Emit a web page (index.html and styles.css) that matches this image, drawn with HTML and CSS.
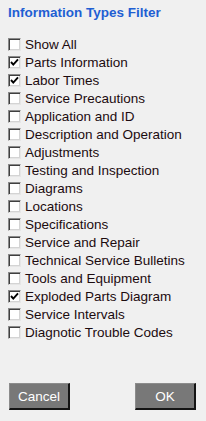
FILE: index.html
```html
<!DOCTYPE html>
<html lang="en">
<head>
    <meta charset="UTF-8">
    <meta name="viewport" content="width=device-width, initial-scale=1.0">
    <title>Information Types Filter</title>
    <link rel="stylesheet" href="styles.css">
</head>
<body>
    <div class="panel">
        <h1 class="title">Information Types Filter</h1>

        <ul class="filter-list">
            <li class="filter-item"><span class="box"></span>Show All</li>
            <li class="filter-item checked"><span class="box"><svg viewBox="0 0 9 9"><path d="M1 4 L3.3 6.6 L8 1.4" /></svg></span>Parts Information</li>
            <li class="filter-item checked"><span class="box"><svg viewBox="0 0 9 9"><path d="M1 4 L3.3 6.6 L8 1.4" /></svg></span>Labor Times</li>
            <li class="filter-item"><span class="box"></span>Service Precautions</li>
            <li class="filter-item"><span class="box"></span>Application and ID</li>
            <li class="filter-item"><span class="box"></span>Description and Operation</li>
            <li class="filter-item"><span class="box"></span>Adjustments</li>
            <li class="filter-item"><span class="box"></span>Testing and Inspection</li>
            <li class="filter-item"><span class="box"></span>Diagrams</li>
            <li class="filter-item"><span class="box"></span>Locations</li>
            <li class="filter-item"><span class="box"></span>Specifications</li>
            <li class="filter-item"><span class="box"></span>Service and Repair</li>
            <li class="filter-item"><span class="box"></span>Technical Service Bulletins</li>
            <li class="filter-item"><span class="box"></span>Tools and Equipment</li>
            <li class="filter-item checked"><span class="box"><svg viewBox="0 0 9 9"><path d="M1 4 L3.3 6.6 L8 1.4" /></svg></span>Exploded Parts Diagram</li>
            <li class="filter-item"><span class="box"></span>Service Intervals</li>
            <li class="filter-item"><span class="box"></span>Diagnotic Trouble Codes</li>
        </ul>

        <div class="actions">
            <button class="btn">Cancel</button>
            <button class="btn">OK</button>
        </div>
    </div>
</body>
</html>
```

FILE: styles.css
```css
* {
    margin: 0;
    padding: 0;
    box-sizing: border-box;
}

body {
    font-family: "Liberation Sans", Arial, sans-serif;
    background: #f0f0f0;
}

.panel {
    height: 100vh;
    display: flex;
    flex-direction: column;
    padding: 5px 0 11px 8px;
}

.title {
    font-size: 13.5px;
    font-weight: 700;
    line-height: 16px;
    color: #1f5fd3;
}

.filter-list {
    list-style: none;
    margin-top: 14px;
}

.filter-item {
    display: flex;
    align-items: center;
    height: 18px;
    font-size: 13.5px;
    color: #1c0b0f;
}

.box {
    width: 13px;
    height: 13px;
    margin-right: 4px;
    background: #fff;
    border-style: solid;
    border-width: 1px;
    border-color: #8a8a8a #e6e6e6 #e6e6e6 #8a8a8a;
    box-shadow: inset 1px 1px 0 #404040, inset -1px -1px 0 #d4d4d4;
    display: flex;
    align-items: center;
    justify-content: center;
}

.box svg {
    width: 9px;
    height: 9px;
}

.box path {
    fill: none;
    stroke: #000;
    stroke-width: 1.9;
}

.actions {
    margin-top: auto;
    display: flex;
    justify-content: space-between;
    padding: 0 10px 0 1px;
}

.btn {
    width: 61px;
    height: 27px;
    font-family: inherit;
    font-size: 13.5px;
    color: #fff;
    background: #787878;
    border-style: solid;
    border-width: 1px 2px 2px 1px;
    border-color: #8c8c8c #141414 #141414 #8c8c8c;
}
```
